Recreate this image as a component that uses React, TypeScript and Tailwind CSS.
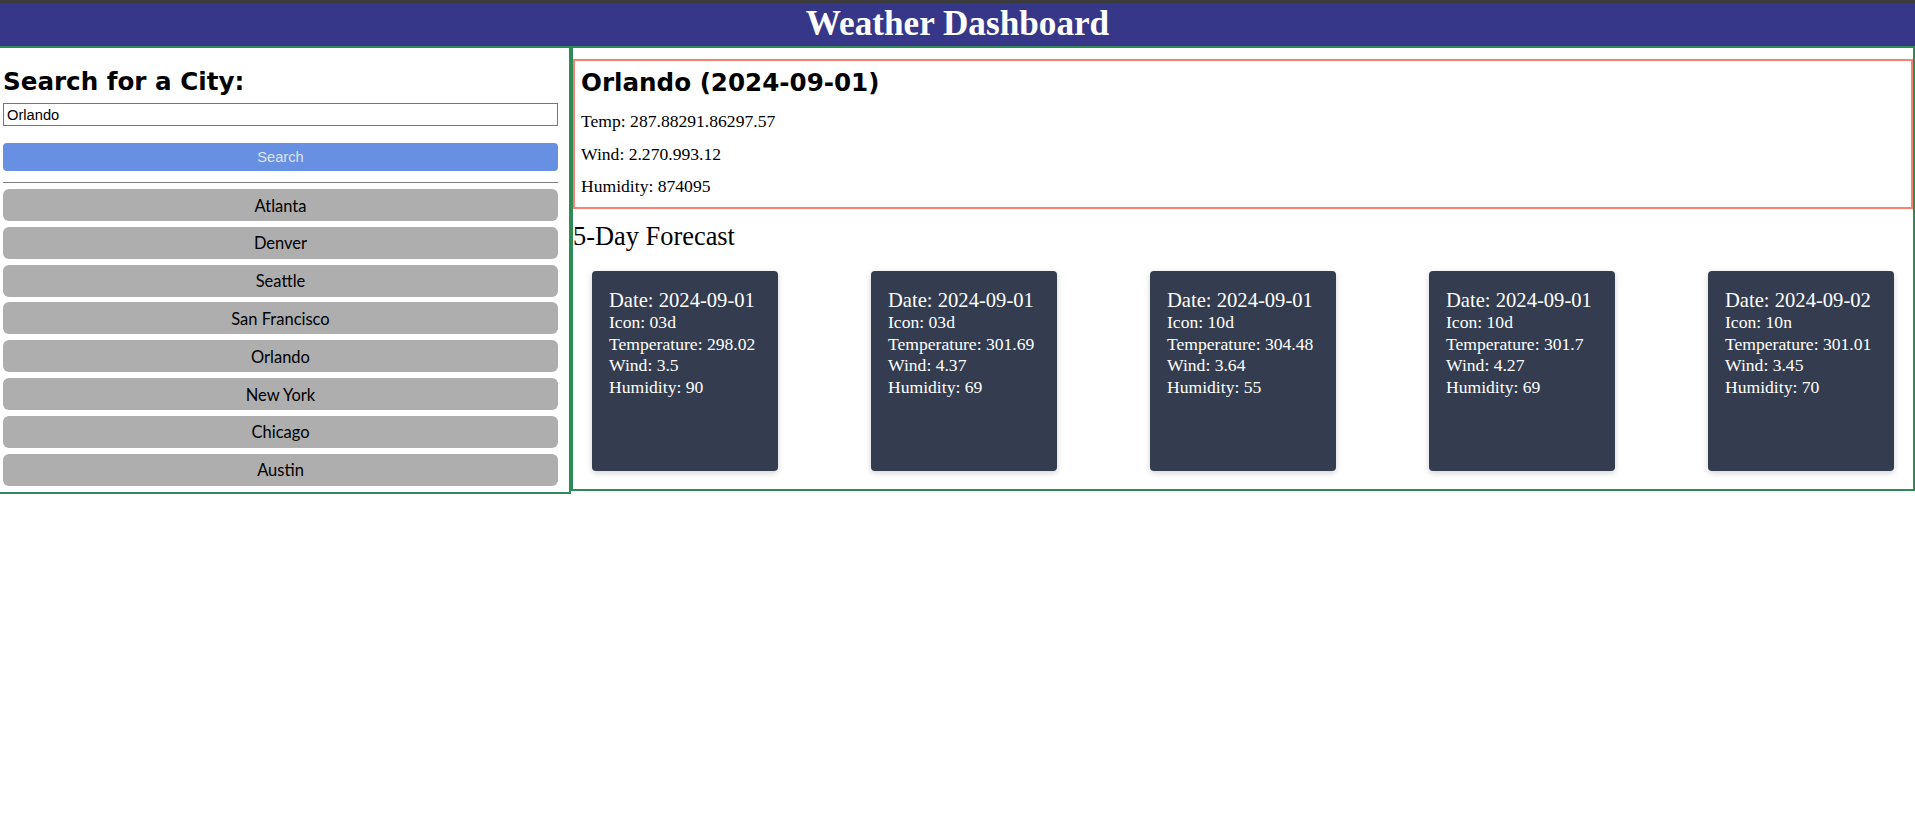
const cities = [
  "Atlanta",
  "Denver",
  "Seattle",
  "San Francisco",
  "Orlando",
  "New York",
  "Chicago",
  "Austin",
];

const forecast = [
  { date: "2024-09-01", icon: "03d", temp: "298.02", wind: "3.5", humidity: "90" },
  { date: "2024-09-01", icon: "03d", temp: "301.69", wind: "4.37", humidity: "69" },
  { date: "2024-09-01", icon: "10d", temp: "304.48", wind: "3.64", humidity: "55" },
  { date: "2024-09-01", icon: "10d", temp: "301.7", wind: "4.27", humidity: "69" },
  { date: "2024-09-02", icon: "10n", temp: "301.01", wind: "3.45", humidity: "70" },
];

const comic = "font-['Comic_Sans_MS','DejaVu_Sans',sans-serif] font-bold";
const serif = "font-['Liberation_Serif','Times_New_Roman',serif]";

function SearchPanel() {
  return (
    <aside className="flex w-[571px] shrink-0 flex-col border-2 border-l-0 border-[#2e8b57] pb-[6px] pl-[3px] pr-[11px]">
      <h2 className={`${comic} mt-[19px] text-[24.6px] leading-[29px] text-black`}>
        Search for a City:
      </h2>
      <input
        type="text"
        defaultValue="Orlando"
        className="mt-[7px] h-[23px] w-full border border-[#767676] bg-white px-[3px] font-['Liberation_Sans',Arial,sans-serif] text-[14.7px] text-black outline-none"
      />
      <button className="mt-[17px] h-[28px] w-full rounded-[4px] bg-[#6890e2] font-['Liberation_Sans',Arial,sans-serif] text-[14.7px] text-[#dde3f0]">
        Search
      </button>
      <hr className="mt-[11px] border-t border-[#808080]" />
      <div className="mt-[6px] flex flex-col gap-[5.8px]">
        {cities.map((city) => (
          <button
            key={city}
            className="flex h-[32px] w-full items-center justify-center rounded-[6px] bg-[#aeaeae] pt-[2px] font-['Lato',sans-serif] text-[16.5px] text-black"
          >
            {city}
          </button>
        ))}
      </div>
    </aside>
  );
}

function ForecastCard({ day }: { day: (typeof forecast)[number] }) {
  return (
    <div className={`${serif} h-[200px] w-[186px] rounded-[4px] bg-[#333d4f] px-[17px] pt-[18px] text-white shadow-[0_2px_6px_rgba(0,0,0,0.18)]`}>
      <p className="text-[20.6px] leading-[23px]">Date: {day.date}</p>
      <p className="text-[17.6px] leading-[21.6px]">Icon: {day.icon}</p>
      <p className="text-[17.6px] leading-[21.6px]">Temperature: {day.temp}</p>
      <p className="text-[17.6px] leading-[21.6px]">Wind: {day.wind}</p>
      <p className="text-[17.6px] leading-[21.6px]">Humidity: {day.humidity}</p>
    </div>
  );
}

function WeatherPanel() {
  return (
    <section className="flex flex-1 flex-col self-start border-2 border-[#2e8b57] pb-[18px]">
      <div className="mt-[11px] border-2 border-[#fa8072] px-[6px] pb-[11px] pt-[7px]">
        <h2 className={`${comic} text-[24.6px] leading-[29px] text-black`}>
          Orlando (2024-09-01)
        </h2>
        <p className={`${serif} mt-[14px] text-[17.6px] leading-[20px] text-black`}>
          Temp: 287.88291.86297.57
        </p>
        <p className={`${serif} mt-[12.5px] text-[17.6px] leading-[20px] text-black`}>
          Wind: 2.270.993.12
        </p>
        <p className={`${serif} mt-[12.5px] text-[17.6px] leading-[20px] text-black`}>
          Humidity: 874095
        </p>
      </div>
      <h3 className={`${serif} mt-[12px] text-[26.4px] leading-[30px] text-black`}>
        5-Day Forecast
      </h3>
      <div className="mt-[20px] flex justify-between px-[19px]">
        {forecast.map((day, i) => (
          <ForecastCard key={i} day={day} />
        ))}
      </div>
    </section>
  );
}

export default function App() {
  return (
    <div className="min-h-screen w-full bg-white">
      <div className="h-[3px] bg-[#3c3c3c]" />
      <header className="flex h-[43px] items-center justify-center bg-[#373789]">
        <h1 className={`${serif} text-[35.2px] font-bold text-white`}>
          Weather Dashboard
        </h1>
      </header>
      <main className="flex items-start">
        <SearchPanel />
        <WeatherPanel />
      </main>
    </div>
  );
}
